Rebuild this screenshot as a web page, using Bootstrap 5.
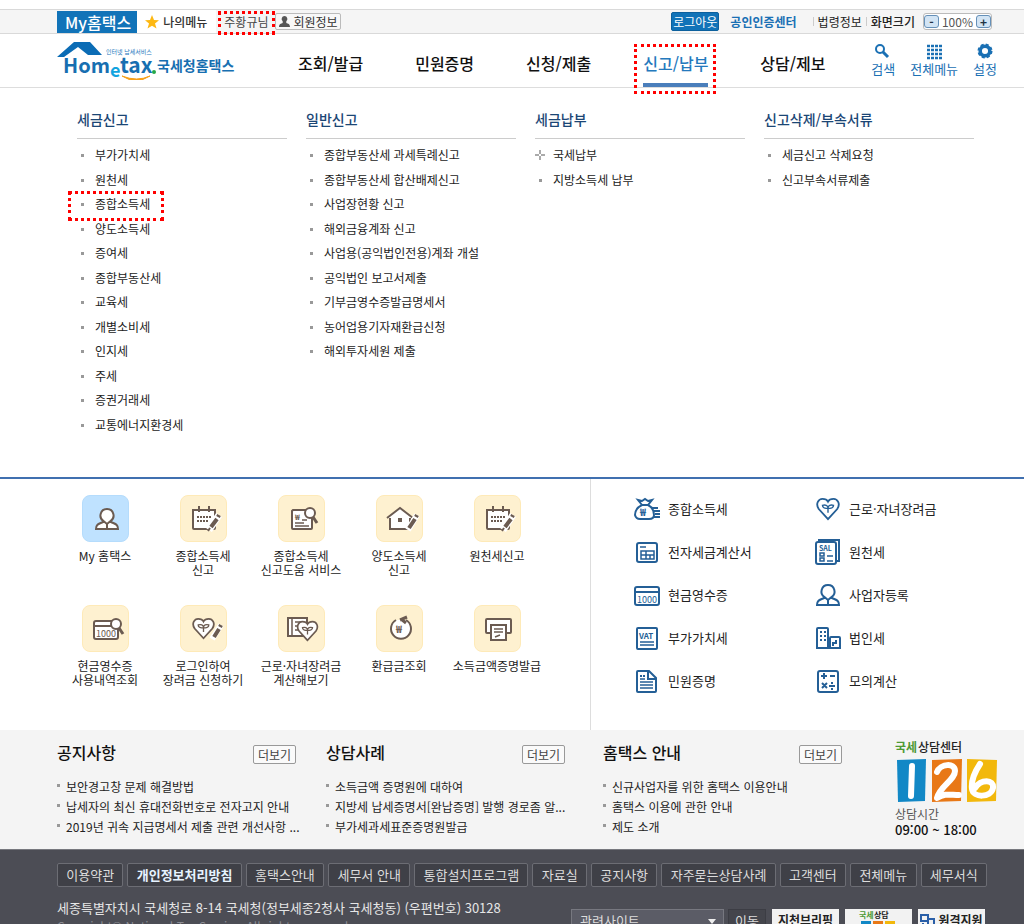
<!DOCTYPE html>
<html lang="ko">
<head>
<meta charset="utf-8">
<meta name="viewport" content="width=device-width, initial-scale=1">
<title>국세청 홈택스</title>
<link rel="stylesheet" href="https://cdn.jsdelivr.net/npm/bootstrap@5.3.0/dist/css/bootstrap.min.css">
<style>
body{font-family:"Noto Sans CJK KR",sans-serif;font-size:12px;line-height:20px;color:#222;background:#fff}
a{color:inherit;text-decoration:none}
ul{list-style:none;margin:0;padding:0}
.wrap{padding-left:57px;padding-right:27px}
.marked{position:relative}
.marked::after{content:"";position:absolute;border:3px dotted #f00;pointer-events:none}
/* top bar */
.topbar{margin-top:9px;border-top:1px solid #d9d9d9;border-bottom:1px solid #d9d9d9;background:#f5f5f5;height:25px;white-space:nowrap}
.my-tab{background:#1173b8;color:#fff;font-size:16px;font-weight:500;line-height:22px;padding:0 6px 0 8px;margin-top:1px;height:22px}
.menu-tab{background:#fff;padding:0 9px 0 8px;gap:4px;color:#333;font-weight:500}
.user-name{margin:0 6px 0 8px;color:#444}
.user-name::after{inset:-1px -6px -3px -6px}
.mini{border:1px solid #bbb;border-radius:2px;background:#f8f8f8;font-size:12px;line-height:15px;padding:0 2px 0 3px;color:#333;height:17px}
.top-right{padding-right:5px}
.logout{background:#1173b8;color:#fff;border:1px solid #0c609d;border-radius:2px;font-size:12px;line-height:17px;height:19px;padding:0 1px}
.cert{margin:0 16px 0 11px;color:#1a70b4;font-weight:700}
.bar-l{border-left:1px solid #ccc;padding-left:4px;line-height:9px}
.law{margin-right:4px}
.size-label{margin-right:8px;font-weight:500}
.zoomer{border:1px solid #bbb;border-radius:3px;background:#fff;height:17px;line-height:15px;color:#555;gap:3px}
.zoomer button{width:15px;height:13px;border:1px solid #6590b8;border-radius:3px;background:#d2e4f4;padding:0;line-height:8px;font-weight:700;font-size:12px;color:#234}
/* header */
.head{border-bottom:1px solid #ddd;height:54px}
.logo{width:180px;height:46px;margin-left:-1px;flex:none}
.gnb{margin-left:62px;gap:52px}
.gnb a{font-size:16px;line-height:24px;font-weight:500;color:#111;white-space:nowrap;padding-top:17px;height:53px}
.gnb a.on{color:#2479bd;border-bottom:4px solid #4a7ebb}
.gnb a.on::after{inset:10px -8px -11px -9px}
.tools{gap:15px;color:#1a70b4;font-size:13px;line-height:18px}
.tools a{text-align:center;white-space:nowrap}
.tools svg{display:block;margin:0 auto;width:18px;height:18px}
/* full menu */
.mega{padding:19px 50px 40px 77px;display:grid;grid-template-columns:repeat(4,1fr);gap:19px;border-bottom:2px solid #4070b0}
.mega h2{font-size:14px;line-height:24px;font-weight:500;color:#1b4675;margin:0;padding-bottom:7px;border-bottom:1px solid #ccc}
.mega ul{display:grid;grid-template-rows:repeat(12,1fr);height:294px;margin-top:4px}
.mega li{position:relative;padding-left:18px;line-height:24px;white-space:nowrap}
.dots li::before{content:"";position:absolute;left:4px;top:11px;width:3px;height:3px;background:#999}
.mega li.plus::before{content:none}
.plus svg{position:absolute;left:0;top:7px}
.mega .marked-item::after{inset:-1px auto auto -9px;width:96px;height:30px}
/* quick services */
.quick{min-height:251px}
.quick-l{width:591px;padding:16px 43px 0 56px;border-right:1px solid #ddd;display:grid;grid-template-columns:repeat(5,98px);grid-auto-rows:110px;align-content:start}
.quick-l a{text-align:center;line-height:14px;white-space:nowrap;display:flex;flex-direction:column;align-items:center}
.tile{width:47px;height:47px;border-radius:8px;background:#fef1d0;border:1px solid #feeab8;margin-bottom:7px;display:block}
.tile.blue{background:#bfe2ff;border-color:#b5dcfc}
.tile svg{display:block;width:45px;height:45px;fill:none;stroke:#6b5b51;stroke-width:2}
.tile text,.qr text{stroke:none}
.quick-r{padding:8px 0 0 43px;display:grid;grid-template-columns:181px 1fr;grid-auto-rows:43px;font-size:13px}
.quick-r a{display:flex;align-items:center;gap:8px;white-space:nowrap}
.qr{width:26px;height:26px;fill:none;stroke:#245f96;stroke-width:2;overflow:visible}
/* notices */
.news{background:#f4f4f4;min-height:119px;padding-top:10px;display:grid;grid-template-columns:239px 239px 239px 1fr;column-gap:30px}
.news.wrap{padding-right:0}
.news h2{font-size:16px;line-height:24px;font-weight:500;margin:0;color:#111}
.guide{margin-left:8px;margin-right:-8px}
.more{border:1px solid #999;border-radius:2px;background:#fafafa;color:#444;font-size:12px;line-height:16px;padding:0;white-space:nowrap;width:43px;height:19px;margin-top:5px}
.news ul{margin-top:13px}
.news li{position:relative;padding-left:9px;line-height:20px;white-space:nowrap}
.news .dots li::before{left:0;top:7px}
.call{margin-left:31px;line-height:16px;color:#555}
.call svg{display:block;overflow:visible}
.call b{display:block;font-size:13px;font-weight:500;color:#111}
/* footer */
.foot{background:#4c4d55;border-top:1px solid #77787e;padding-top:13px;min-height:110px;color:#ddd;font-size:13px}
.flinks{display:flex;gap:4px;white-space:nowrap;padding-right:10px}
.flinks a{border:1px solid #6c6d74;border-radius:2px;background:#3f4047;line-height:21px;padding:0 8px;height:24px;flex-grow:1;text-align:center}
.flinks a.strong{font-weight:700;color:#e6f3ff}
.addr{line-height:20px;padding-top:11px;white-space:nowrap;color:#e6e6e6}
.addr small{display:block;font-size:12px;color:#8b8c93;line-height:16px}
.related{margin-top:22px;white-space:nowrap;padding-right:12px}
.related select{width:153px;height:24px;background:#5b5c66;color:#ddd;border:1px solid #777880;font-size:13px;padding:0 8px;appearance:none}
.selbox{position:relative}
.selbox::after{content:"";position:absolute;right:8px;top:10px;border:4px solid transparent;border-top:5px solid #eee;pointer-events:none}
.related button{width:38px;height:24px;border:1px solid #3c3d44;background:#44454c;color:#ddd;font-size:13px;line-height:20px;padding:0;margin:0 6px 0 4px}
.partner{width:67px;height:26px;background:#f2f2f2;color:#222;font-weight:700;font-size:12px;line-height:22px;margin-right:6px;display:flex;justify-content:center;gap:2px}
.partner svg{overflow:visible}
.partner:last-child{margin-right:0}
</style>
</head>
<body>
<svg width="0" height="0" class="position-absolute" aria-hidden="true">
<defs>
<symbol id="cal" viewBox="0 0 45 45"><path fill="#fff" d="M12 14h22v18q0 1-1 1H13q-1 0-1-1z"/><path d="M18 10v6M28 10v6"/><path stroke-width="2" stroke-dasharray="2 1" d="M16 21h15M16 25h12"/><path d="M38 19L28 34" stroke="#fff" stroke-width="7"/><path d="M38 19l-1 2M36 23l-6 8" stroke-width="4"/><path d="M29 32l-2 3"/></symbol>
<symbol id="person" viewBox="0 0 26 26"><path fill="#fff" d="M9 16c-4 2-7 2-7 7h22c0-5-3-5-7-7z"/><path fill="#fff" d="M13 3a6.500 6.500 0 0 1 3.500 12L13 18l-3.500-3A6.500 6.500 0 0 1 13 3z"/><path d="M13 18v4"/></symbol>
<symbol id="heart" viewBox="0 0 26 26"><path fill="#fff" d="M13 24L3 13C-1 7 3 2 7 2c3 0 5 1 6 3 1-2 3-3 6-3 4 0 8 5 4 11z"/><path d="M13 17v-5M13 12c-4 1-6-1-6-3 3-1 6 0 6 3zM13 12c4 1 6-1 6-3-3-1-6 0-6 3z" stroke-width="1.500"/></symbol>
</defs>
</svg>

<div class="topbar"><div class="wrap d-flex align-items-stretch h-100">
<a href="#" class="my-tab">My홈택스</a>
<a href="#" class="menu-tab d-flex align-items-center"><svg width="14" height="14" viewBox="0 0 14 14"><path fill="#fdb813" d="M7 0l2 5 5 .3-4 3.200 1.500 5L7 10.700 2.500 13.500 4 8.500 0 5.300 5 5z"/></svg>나의메뉴</a>
<span class="user-name marked align-self-center">주황규님</span>
<button class="mini align-self-center d-flex align-items-center" type="button"><svg width="11" height="11" viewBox="0 0 11 11" class="me-1"><path fill="#555" d="M5.500 0a3 3 0 0 1 1.800 5.300V7C9 7.500 11 8 11 11H0c0-3 2-3.500 3.700-4V5.300A3 3 0 0 1 5.500 0z"/></svg>회원정보</button>
<div class="top-right ms-auto d-flex align-items-center">
<button class="logout" type="button">로그아웃</button>
<a href="#" class="cert">공인인증센터</a>
<a href="#" class="bar-l law">법령정보</a>
<span class="bar-l size-label">화면크기</span>
<div class="zoomer d-flex align-items-center"><button type="button" aria-label="축소">-</button>100%<button type="button" aria-label="확대">+</button></div>
</div></div></div>

<header class="head"><div class="wrap d-flex">
<a href="#" class="logo" aria-label="국세청홈택스"><svg width="180" height="46" viewBox="0 0 180 46" font-weight="700">
<path fill="#0b6cb5" d="M1 23L18 8h16l12 13H32l-10-8L8 23z"/>
<text x="7" y="39" font-size="20" fill="#176fb1">Hom</text><text x="54" y="43" font-size="18" fill="#12a4df">e</text><text x="64" y="39" font-size="21" fill="#176fb1">tax</text>
<circle cx="98" cy="38" r="2" fill="#25a849"/><path d="M66 42q14 9 28 0q-13 6-28 0" fill="#f7a11a" stroke="#f7a11a"/>
<text x="50" y="20" font-size="6" font-weight="400" fill="#2479bd">인터넷 납세서비스</text><text x="101" y="37" font-size="14" fill="#176fb1">국세청홈택스</text></svg></a>
<nav class="gnb d-flex"><a href="#">조회/발급</a><a href="#">민원증명</a><a href="#">신청/제출</a><a href="#" class="on marked">신고/납부</a><a href="#">상담/제보</a></nav>
<div class="tools d-flex ms-auto pt-2">
<a href="#"><svg viewBox="0 0 18 18" fill="none" stroke="#1a70b4" stroke-width="2"><circle cx="6" cy="7" r="4"/><path d="M9 10l5 5" stroke-width="3"/></svg>검색</a>
<a href="#"><svg viewBox="0 0 18 18" fill="none" stroke="#1a70b4" stroke-width="3" stroke-dasharray="3 1"><path d="M2 4h15M2 8h15M2 12h15M2 16h15" stroke-width="2.500"/></svg>전체메뉴</a>
<a href="#"><svg viewBox="0 0 18 18" fill="none" stroke="#1a70b4"><circle cx="9" cy="9" r="4.800" stroke-width="3.500"/><circle cx="9" cy="9" r="6.500" stroke-width="2" stroke-dasharray="3 2.100"/></svg>설정</a>
</div></div></header>

<section class="mega">
<div><h2>세금신고</h2><ul class="dots"><li><a href="#">부가가치세</a></li><li><a href="#">원천세</a></li><li class="marked marked-item"><a href="#">종합소득세</a></li><li><a href="#">양도소득세</a></li><li><a href="#">증여세</a></li><li><a href="#">종합부동산세</a></li><li><a href="#">교육세</a></li><li><a href="#">개별소비세</a></li><li><a href="#">인지세</a></li><li><a href="#">주세</a></li><li><a href="#">증권거래세</a></li><li><a href="#">교통에너지환경세</a></li></ul></div>
<div><h2>일반신고</h2><ul class="dots"><li><a href="#">종합부동산세 과세특례신고</a></li><li><a href="#">종합부동산세 합산배제신고</a></li><li><a href="#">사업장현황 신고</a></li><li><a href="#">해외금융계좌 신고</a></li><li><a href="#">사업용(공익법인전용)계좌 개설</a></li><li><a href="#">공익법인 보고서제출</a></li><li><a href="#">기부금영수증발급명세서</a></li><li><a href="#">농어업용기자재환급신청</a></li><li><a href="#">해외투자세원 제출</a></li></ul></div>
<div><h2>세금납부</h2><ul class="dots"><li class="plus"><svg width="10" height="10" viewBox="0 0 10 10" fill="#aaa"><path d="M4 0h2v4h4v2H6v4H4V6H0V4h4z"/><path fill="#fff" d="M4 4h2v2H4z"/></svg><a href="#">국세납부</a></li><li><a href="#">지방소득세 납부</a></li></ul></div>
<div><h2>신고삭제/부속서류</h2><ul class="dots"><li><a href="#">세금신고 삭제요청</a></li><li><a href="#">신고부속서류제출</a></li></ul></div>
</section>

<section class="quick d-flex">
<div class="quick-l">
<a href="#"><span class="tile blue"><svg><use href="#person" x="11" y="10" width="26" height="26"/></svg></span>My 홈택스</a>
<a href="#"><span class="tile"><svg><use href="#cal" width="45" height="45"/></svg></span>종합소득세<br>신고</a>
<a href="#"><span class="tile"><svg><path fill="#fff" d="M14 14h19v18q0 1-1 1H14q-1 0-1-1V15z"/><path d="M16 27h9M16 30h14M23 24h5" stroke-width="1.500"/><text x="16" y="24" font-size="8" font-weight="700" fill="#6b5b51">₩</text><circle cx="31" cy="17" r="5" fill="#fff"/><path d="M34 21l4 6" stroke-width="3"/></svg></span>종합소득세<br>신고도움 서비스</a>
<a href="#"><span class="tile"><svg><path fill="#fff" d="M13 21v12h20V21"/><path d="M10 22l13-10 13 10" fill="#fff"/><path d="M21 22h4v4h-4z" fill="#6b5b51" stroke="none"/><path d="M40 19L31 34" stroke="#fff" stroke-width="6"/><path d="M40 19l-1 2M38 23l-6 9" stroke-width="4"/></svg></span>양도소득세<br>신고</a>
<a href="#"><span class="tile"><svg><use href="#cal" width="45" height="45"/></svg></span>원천세신고</a>
<a href="#"><span class="tile"><svg><rect x="11" y="15" width="24" height="18" rx="2" fill="#fff"/><path d="M11 20h24"/><text x="13" y="31" font-size="9" fill="#6b5b51">1000</text><circle cx="33" cy="18" r="5" fill="#fff"/><path d="M36 22l4 6" stroke-width="3"/></svg></span>현금영수증<br>사용내역조회</a>
<a href="#"><span class="tile"><svg><use href="#heart" x="11" y="11" width="23" height="23"/><path d="M40 19L31 33" stroke="#fff" stroke-width="6"/><path d="M40 19l-1 2M38 23l-5 8" stroke-width="4"/></svg></span>로그인하여<br>장려금 신청하기</a>
<a href="#"><span class="tile"><svg><path fill="#fff" d="M9 12h19v18H9z"/><path d="M13 12v18M16 16h7M16 20h4M16 24h4" stroke-width="1.500"/><use href="#heart" x="17" y="14" width="23" height="22"/></svg></span>근로·자녀장려금<br>계산해보기</a>
<a href="#"><span class="tile"><svg><path fill="#fff" d="M19 14a10 10 0 1 0 10 0"/><path d="M23 14l7-3M24 13l5 4" stroke-width="3"/><text x="19" y="27" font-size="10" font-weight="700" fill="#6b5b51">₩</text></svg></span>환급금조회</a>
<a href="#"><span class="tile"><svg><path fill="#fff" d="M16 27h-4q-1 0-1-1V14q0-1 1-1h23q1 0 1 1v12q0 1-1 1h-4"/><path fill="#fff" d="M16 19h15v15H16z"/><path d="M19 23h9M19 26h9M20 31l5-2" stroke-width="1.500"/></svg></span>소득금액증명발급</a>
</div>
<div class="quick-r flex-grow-1">
<a href="#"><svg class="qr" viewBox="0 0 26 26"><path d="M8 9C2 12 1 16 1 19q1 4 5 4h9q5 0 5-4c0-4-2-8-6-10zM8 9L4 4l4 1 3-2 3 2 4-1-4 5z"/><path d="M18 12h6M20 15h6M21 18h5M20 21h6"/><text x="6" y="20" font-size="10" font-weight="700" fill="#245f96">₩</text></svg>종합소득세</a>
<a href="#"><svg class="qr" viewBox="0 0 26 26"><use href="#heart" x="1" y="1" width="24" height="24"/></svg>근로·자녀장려금</a>
<a href="#"><svg class="qr" viewBox="0 0 26 26"><rect x="3" y="4" width="20" height="19" rx="2"/><path d="M6 8h6M7 12h13v8H7zM7 16h13M12 12v8M16 16v4" stroke-width="1.500"/></svg>전자세금계산서</a>
<a href="#"><svg class="qr" viewBox="0 0 26 26"><path d="M4 3V1h20v21h-2"/><rect x="1" y="3" width="20" height="22" rx="2" fill="#fff"/><text x="4" y="12" font-size="7" font-weight="700" fill="#245f96">SAL</text><path d="M5 14h4v3H5zM5 19h4v3H5zM12 17h6M12 22h6" stroke-width="1.500"/></svg>원천세</a>
<a href="#"><svg class="qr" viewBox="0 0 26 26"><rect x="1" y="5" width="24" height="18" rx="2"/><path d="M1 10h24"/><text x="3" y="21" font-size="9" fill="#245f96">1000</text></svg>현금영수증</a>
<a href="#"><svg class="qr" viewBox="0 0 26 26"><use href="#person" width="26" height="26"/></svg>사업자등록</a>
<a href="#"><svg class="qr" viewBox="0 0 26 26"><rect x="3" y="3" width="20" height="21" rx="1"/><text x="5" y="14" font-size="8" font-weight="700" fill="#245f96">VAT</text><path d="M6 17h14M6 20h14" stroke-width="1.500"/></svg>부가가치세</a>
<a href="#"><svg class="qr" viewBox="0 0 26 26"><path d="M2 23V4q0-1 1-1h9q1 0 1 1v19zM15 23V13q0-1 1-1h8q1 0 1 1v10zH2"/><path d="M5 7h6M5 11h6M5 15h6" stroke-dasharray="2 2"/><path d="M21 15v3h-3v3"/></svg>법인세</a>
<a href="#"><svg class="qr" viewBox="0 0 26 26"><path d="M4 3h11l7 7v13q0 1-1 1H4q-1 0-1-1V4q0-1 1-1zM14 3v8h8"/><path d="M6 14h13M6 17h13M6 20h13M6 11h5" stroke-width="1.500"/><path d="M6 8h5" stroke-dasharray="2 1"/></svg>민원증명</a>
<a href="#"><svg class="qr" viewBox="0 0 26 26"><rect x="3" y="3" width="20" height="21" rx="2"/><path d="M6 8h6M9 5v6M15 8h5M7 15l5 5M12 15l-5 5M14 18h6M16 15h2M16 21h2"/></svg>모의계산</a>
</div>
</section>

<section class="news wrap">
<div><div class="d-flex justify-content-between align-items-start"><h2>공지사항</h2><button class="more" type="button">더보기</button></div>
<ul class="dots"><li><a href="#">보안경고창 문제 해결방법</a></li><li><a href="#">납세자의 최신 휴대전화번호로 전자고지 안내</a></li><li><a href="#">2019년 귀속 지급명세서 제출 관련 개선사항 ...</a></li></ul></div>
<div><div class="d-flex justify-content-between align-items-start"><h2>상담사례</h2><button class="more" type="button">더보기</button></div>
<ul class="dots"><li><a href="#">소득금액 증명원에 대하여</a></li><li><a href="#">지방세 납세증명서[완납증명] 발행 경로좀 알...</a></li><li><a href="#">부가세과세표준증명원발급</a></li></ul></div>
<div class="guide"><div class="d-flex justify-content-between align-items-start"><h2>홈택스 안내</h2><button class="more" type="button">더보기</button></div>
<ul class="dots"><li><a href="#">신규사업자를 위한 홈택스 이용안내</a></li><li><a href="#">홈택스 이용에 관한 안내</a></li><li><a href="#">제도 소개</a></li></ul></div>
<div class="call"><svg width="104" height="66" viewBox="0 0 104 66">
<text x="0" y="12" font-size="12" font-weight="700" fill="#4d9a35">국세</text><text x="23" y="12" font-size="12" font-weight="500" fill="#222">상담센터</text>
<path fill="#1288c6" d="M2 20l29-1-1 42-27 1z"/><path fill="#e87817" d="M37 20l30-1-1 42-29 1z"/><path fill="#f2b80c" d="M72 19l30 1-1 41-29 1z"/>
<g fill="none" stroke="#fff" stroke-width="6" stroke-linecap="round" stroke-linejoin="round"><path d="M17 26l-1 30"/><path d="M42 32c3-8 18-10 18-1 0 9-15 15-18 27 8-5 13-3 22-3"/><path d="M85 24c-6 9-9 17-8 25 1 9 19 9 21-1 1-9-12-9-18 0"/></g></svg>
<div>상담시간</div><b>09:00 ~ 18:00</b></div>
</section>

<footer class="foot wrap">
<nav class="flinks"><a href="#">이용약관</a><a href="#" class="strong">개인정보처리방침</a><a href="#">홈택스안내</a><a href="#">세무서 안내</a><a href="#">통합설치프로그램</a><a href="#">자료실</a><a href="#">공지사항</a><a href="#">자주묻는상담사례</a><a href="#">고객센터</a><a href="#">전체메뉴</a><a href="#">세무서식</a></nav>
<div class="d-flex justify-content-between">
<div class="addr">세종특별자치시 국세청로 8-14 국세청(정부세종2청사 국세청동) (우편번호) 30128<small>Copyright© National Tax Service. All rights reserved.</small></div>
<div class="related d-flex"><div class="selbox"><select aria-label="관련사이트"><option>관련사이트</option></select></div><button type="button">이동</button>
<a href="#" class="partner">지천브리핑</a>
<a href="#" class="partner"><svg width="44" height="24" viewBox="0 0 44 24"><text x="2" y="9" font-size="8" fill="#4d9a35">국세</text><text x="17" y="9" font-size="8" fill="#222">상담</text><path fill="#1288c6" d="M4 12h10v12H4z"/><path fill="#e87817" d="M16 12h10v12H16z"/><path fill="#f2b80c" d="M28 12h10v12H28z"/></svg></a>
<a href="#" class="partner"><svg width="16" height="24" viewBox="0 0 16 24" fill="none" stroke="#2a5fa8" stroke-width="2"><path d="M1 6h7v6H1zM8 10h6v7H8zM3 14v3h3"/></svg>원격지원</a>
</div></div>
</footer>
<script src="https://cdn.jsdelivr.net/npm/bootstrap@5.3.0/dist/js/bootstrap.bundle.min.js"></script>
</body>
</html>
